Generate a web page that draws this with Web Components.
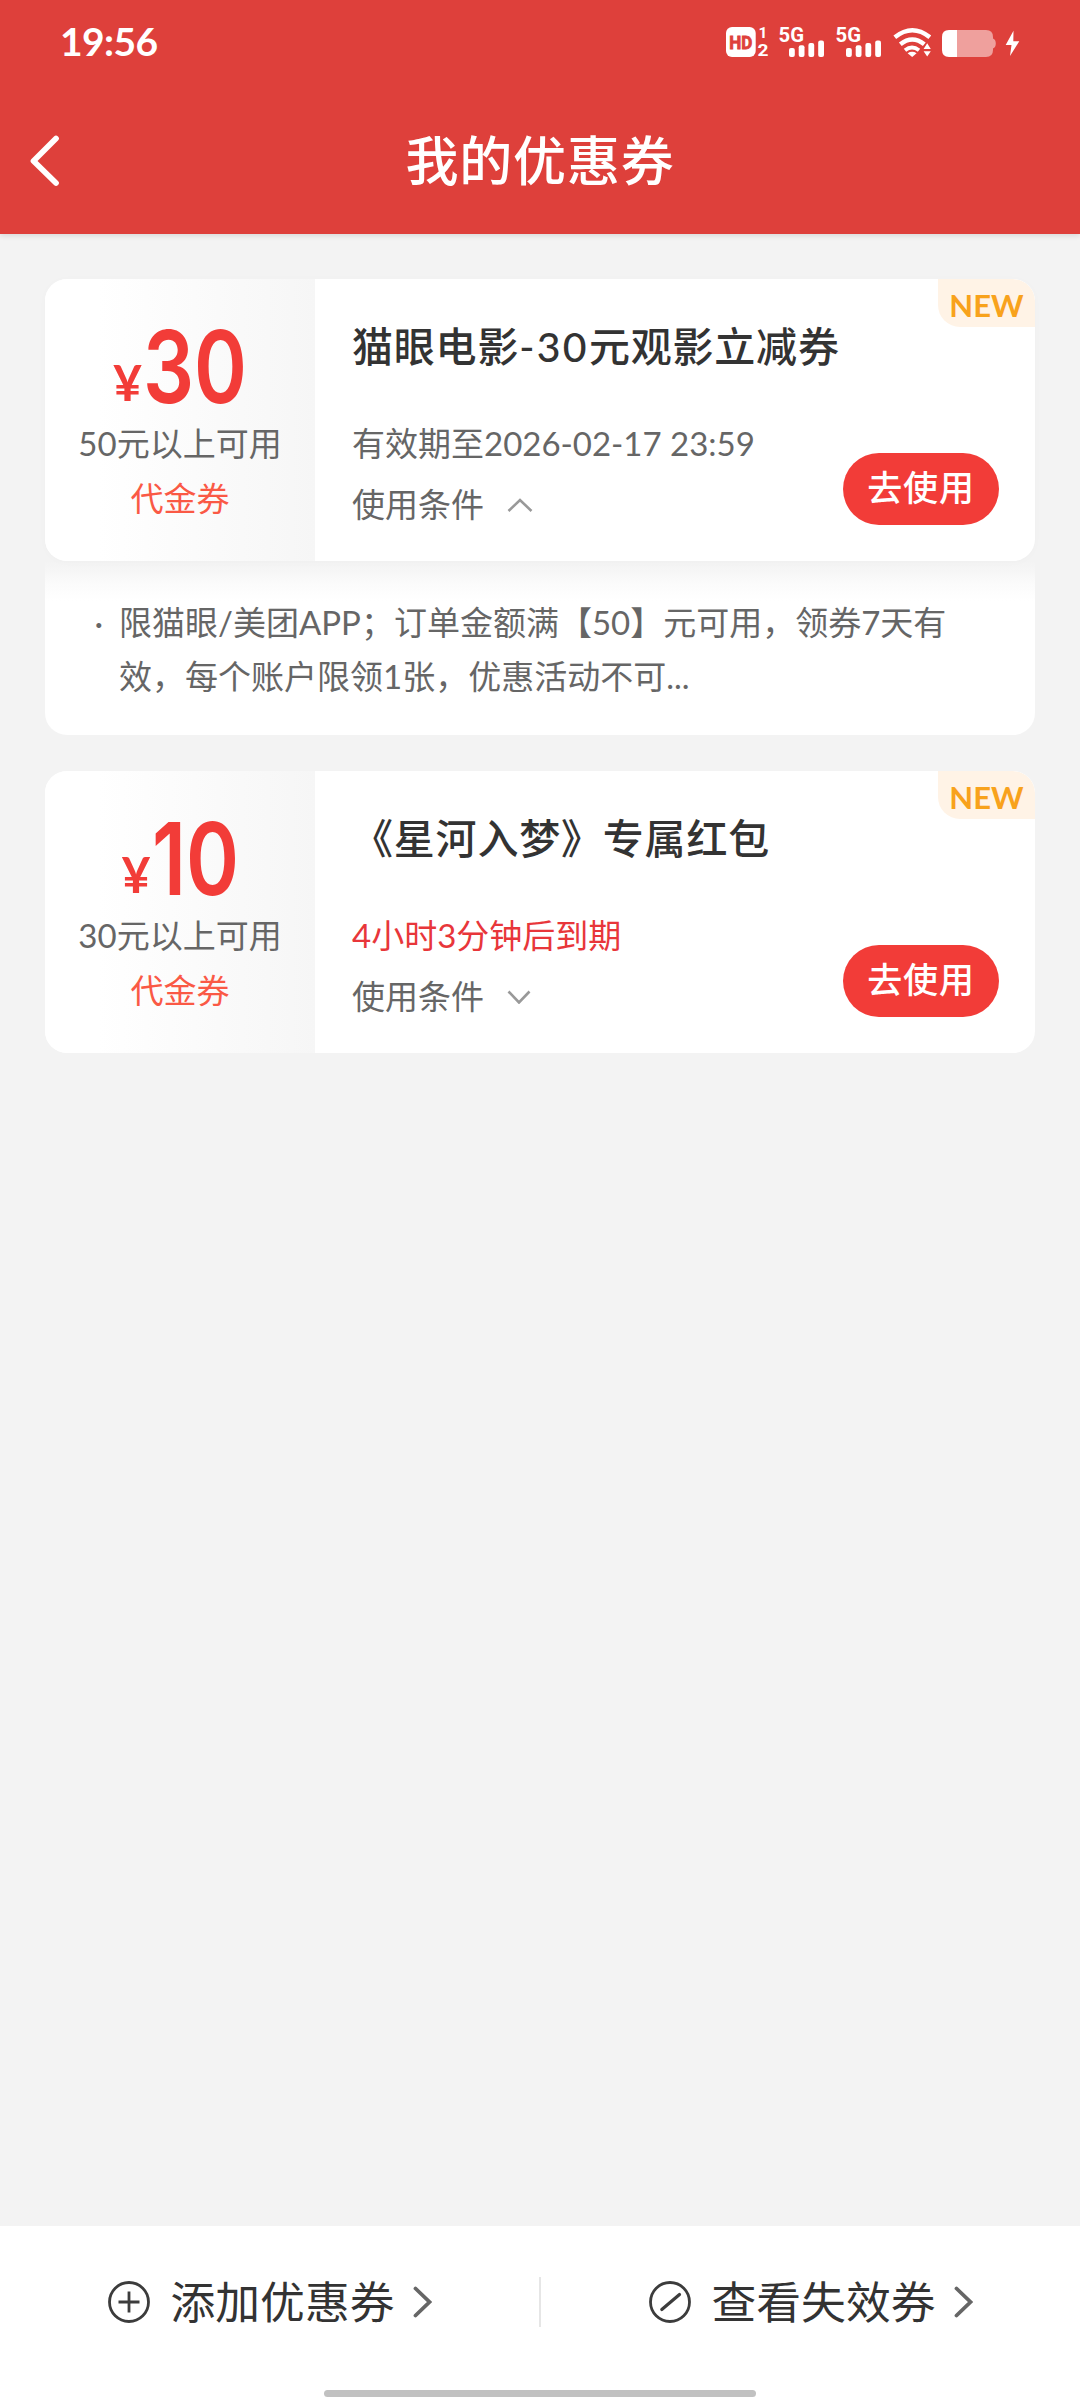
<!DOCTYPE html>
<html lang="zh-CN">
<head>
<meta charset="utf-8">
<title>我的优惠券</title>
<style>
  html, body { margin: 0; padding: 0; }
  body { font-family: Lato, "Noto Sans CJK SC", sans-serif; background: #f3f3f3; }
</style>
</head>
<body>
<coupon-app></coupon-app>
<script>
const define = (name, html, setup) => {
  const tpl = document.createElement('template');
  tpl.innerHTML = html;
  customElements.define(name, class extends HTMLElement {
    constructor() {
      super();
      this.attachShadow({ mode: 'open' }).appendChild(tpl.content.cloneNode(true));
    }
    connectedCallback() { if (setup) setup(this, this.shadowRoot); }
  });
};

define('signal-icon', `
<style>:host{display:block;width:46px;height:40px}svg{display:block}</style>
<svg width="46" height="40" viewBox="778 20 46 40" fill="#fff">
  <text x="778.6" y="41.6" font-family="Roboto" font-weight="700" font-size="20.5" textLength="25.5" lengthAdjust="spacingAndGlyphs">5G</text>
  <rect x="789" y="48" width="5.8" height="9" rx="2"/>
  <rect x="798.7" y="45.3" width="5.8" height="11.7" rx="2"/>
  <rect x="808.4" y="43" width="5.8" height="14" rx="2"/>
  <rect x="818.2" y="40.5" width="5.8" height="16.5" rx="2"/>
</svg>`);

define('status-bar', `
<style>
  :host{display:flex;height:84px;box-sizing:border-box;padding:0 60px 0 60px;justify-content:space-between;color:#fff}
  .time{font-size:39px;line-height:83px;font-weight:700;letter-spacing:-.6px}
  .icons{display:flex;padding-top:20px;height:40px}
  svg{display:block}
</style>
<span class="time">19:56</span>
<div class="icons">
  <svg width="52" height="40" viewBox="726 20 52 40" fill="#fff">
    <rect x="726" y="27" width="29.7" height="30" rx="6"/>
    <text x="729.3" y="49" fill="#de403b" stroke="#de403b" stroke-width=".9" font-family="Roboto" font-weight="700" font-size="19" textLength="23" lengthAdjust="spacingAndGlyphs">HD</text>
    <text x="758.4" y="37.8" font-family="Roboto" font-weight="700" font-size="15.500">1</text>
    <text x="757.6" y="56.3" font-family="Roboto" font-weight="700" font-size="17" textLength="11" lengthAdjust="spacingAndGlyphs">2</text>
  </svg>
  <signal-icon></signal-icon>
  <signal-icon style="margin-left:11px"></signal-icon>
  <svg width="50" height="40" viewBox="881 20 50 40" fill="none" stroke="#fff" stroke-width="4.4">
    <path d="M894.8 37.2Q912.3 23.2 929.8 37.2"/>
    <path d="M900.3 44.3Q912.3 34.5 924.3 44.3"/>
    <path d="M905 50.3Q912 44.6 919 50.3" stroke-width="3.8"/>
    <path d="M907.6 53.2Q912.2 50.4 916.6 53.2L912.2 57Z" fill="#fff" stroke="none"/>
    <path d="M923.6 49L927.2 43.2L930.8 49ZM923.6 51.2H930.8L927.2 56.6Z" fill="#fff" stroke="none"/>
  </svg>
  <svg width="89" height="40" viewBox="931 20 89 40" fill="#fff">
    <path opacity=".5" d="M957 30H986Q993 30 993 37V38.5Q995.8 39.5 995.8 43.5T993 48.500V50Q993 57 986 57H957Z"/>
    <path d="M957 30V57H949Q942 57 942 50V37Q942 30 949 30Z"/>
    <path d="M1013.500 30.700L1005.700 45H1011.500L1010 56L1019.300 41.200H1013.300Z"/>
  </svg>
</div>`);

define('app-header', `
<style>
  :host{display:block;height:234px;background:#de403b;color:#fff;box-shadow:0 2px 5px rgba(0,0,0,.1);position:relative}
  nav{display:grid;grid-template-columns:90px 1fr 90px;height:150px;align-items:center}
  svg{display:block}
  h1{margin:0;font-size:53px;font-weight:500;line-height:153px;text-align:center;letter-spacing:.8px}
</style>
<status-bar></status-bar>
<nav>
  <svg width="90" height="150" viewBox="0 84 90 150" fill="none" stroke="#fff" stroke-width="5.700" stroke-linecap="round" stroke-linejoin="round"><path d="M56 136.500L33.500 159L56 181"/></svg>
  <h1><slot></slot></h1>
</nav>`);

define('price-tag', `
<style>
  :host{display:flex;height:90px;justify-content:center;color:#f23c38}
  .y{font-size:50px;font-weight:700;line-height:60px;padding-top:31px;width:29px;margin-right:1px}
  svg{display:block;overflow:visible}
  text{font-family:Inter;font-weight:600;font-size:100px;fill:#f23c38}
</style>
<span class="y">¥</span><svg height="90"><text y="82" x="0" lengthAdjust="spacingAndGlyphs"></text></svg>`,
(el, root) => {
  const w = el.getAttribute('width');
  root.querySelector('svg').setAttribute('width', w);
  const t = root.querySelector('text');
  t.setAttribute('textLength', w);
  t.textContent = el.getAttribute('value');
});

define('use-button', `
<style>
  :host{display:block;width:156px;height:72px;border-radius:36px;background:#f23c38;color:#fff;
    font-size:35px;font-weight:500;line-height:69px;text-align:center;letter-spacing:.8px}
</style><slot></slot>`);

define('new-badge', `
<style>
  :host{display:block;width:97px;height:48px;border-radius:0 22px 0 22px;background:#fff3e6;color:#f8a21c;
    font-size:31px;font-weight:700;line-height:52px;text-align:center}
</style>NEW`);

define('coupon-card', `
<style>
  :host{display:block}
  .card{position:relative;display:flex;height:282px;border-radius:22px;background:#fff;overflow:hidden}
  :host([open]) .card{box-shadow:0 1px 8px rgba(0,0,0,.02)}
  .left{flex:none;width:270px;box-sizing:border-box;padding-top:42px;background:linear-gradient(90deg,#fff 20%,#f6f6f6);text-align:center}
  .sub,.kind,.date,.cond{font-size:33px;line-height:54px;color:#666}
  .sub{margin-top:5px}
  .kind{color:#fa5945;margin-top:1px}
  .right{flex:1;display:flex;justify-content:space-between;padding:37px 36px 0 37px}
  .title{font-size:41px;font-weight:500;line-height:61px;color:#333;white-space:nowrap;letter-spacing:.8px}
  .date{margin-top:39px;white-space:nowrap}
  .info{width:490px}
  :host([urgent]) .date{color:#e8363a}
  .cond{display:flex;margin-top:7px;align-items:center}
  .cond svg{margin:2px 0 0 23px}
  .down{display:none}
  :host(:not([open])) .down{display:block}
  :host(:not([open])) .up{display:none}
  use-button{margin-top:137px;flex:none}
  new-badge{position:absolute;right:0;top:0}
  .terms{display:none}
  :host([open]) .terms{display:flex;height:174px;margin-top:-24px;padding-top:24px;border-radius:0 0 22px 22px;
    background:linear-gradient(#f3f3f3 24px,#f6f6f6 34px,#fbfbfb 46px,#fff 64px)}
  .dot{width:74px;padding:34px 0 0 0;line-height:54px;font-size:33px;color:#666;box-sizing:border-box;text-align:right;padding-right:16px}
  .body{padding-top:34px;line-height:54px;font-size:33px;color:#666}
</style>
<div class="card">
  <div class="left">
    <price-tag></price-tag>
    <div class="sub"><slot name="sub"></slot></div>
    <div class="kind">代金券</div>
  </div>
  <div class="right">
    <div class="info">
      <div class="title"><slot name="title"></slot></div>
      <div class="date"><slot name="date"></slot></div>
      <div class="cond">使用条件
        <svg class="up" width="26" height="14" viewBox="0 0 26 14" fill="none" stroke="#999" stroke-width="2.600"><path d="M1.500 13L13 2L24.500 13"/></svg>
        <svg class="down" width="26" height="14" viewBox="0 0 26 14" fill="none" stroke="#999" stroke-width="2.600"><path d="M1.500 1.500L12 12.500L22.500 1.500"/></svg>
      </div>
    </div>
    <use-button>去使用</use-button>
  </div>
  <new-badge></new-badge>
</div>
<div class="terms"><span class="dot">·</span><div class="body"><slot name="terms"></slot></div></div>`,
(el, root) => {
  const p = root.querySelector('price-tag');
  p.setAttribute('value', el.getAttribute('value'));
  p.setAttribute('width', el.getAttribute('value-width'));
  p.replaceWith(p.cloneNode());
});

define('bottom-link', `
<style>
  :host{display:flex;align-items:center;justify-content:center;font-size:44.8px;color:#333;line-height:60px}
  .t{margin:0 18px 0 21px;white-space:nowrap}
  svg{display:block}
  .plus,.slash{display:none}
  :host([icon=plus]) .plus,:host([icon=slash]) .slash{display:block}
</style>
<svg width="42" height="42" viewBox="0 0 42 42" fill="none" stroke="#3c3c3c" stroke-width="2.800">
  <circle cx="21" cy="21" r="19.500"/>
  <path class="plus" d="M10.500 21H31.500M21 10.500V31.500"/>
  <path class="slash" stroke-width="3.200" stroke-linecap="round" d="M12.800 28.500L30.500 13.500"/>
</svg>
<span class="t"><slot></slot></span>
<svg width="19" height="32" viewBox="0 0 19 32" fill="none" stroke="#666" stroke-width="3.800" stroke-linecap="round"><path d="M2.500 2.500L16.500 16L2.500 29.500"/></svg>`);

define('bottom-bar', `
<style>
  :host{display:flex;flex-direction:column;align-items:center;height:174px;background:#fff}
  .row{display:grid;grid-template-columns:539px 2px 539px;height:151px;align-items:center}
  i{height:50px;background:#e6e6e6}
  .home{width:432px;height:7px;border-radius:4px;background:#c1c1c1;margin-top:13px}
</style>
<div class="row">
  <bottom-link icon="plus">添加优惠券</bottom-link><i></i><bottom-link icon="slash">查看失效券</bottom-link>
</div>
<div class="home"></div>`);

define('coupon-app', `
<style>
  :host{display:flex;flex-direction:column;width:1080px;height:2400px;background:#f3f3f3;overflow:hidden}
  main{flex:1;display:flex;flex-direction:column;gap:36px;padding:45px 45px 0}
  .num{letter-spacing:2.300px}
</style>
<app-header>我的优惠券</app-header>
<main>
  <coupon-card open value="30" value-width="104">
    <span slot="sub">50元以上可用</span>
    <span slot="title">猫眼电影<span class="num">-30</span>元观影立减券</span>
    <span slot="date">有效期至2026-02-17 23:59</span>
    <span slot="terms">限猫眼/美团APP；订单金额满【50】元可用，领券7天有<br>效，每个账户限领1张，优惠活动不可...</span>
  </coupon-card>
  <coupon-card urgent value="10" value-width="87">
    <span slot="sub">30元以上可用</span>
    <span slot="title">《星河入梦》专属红包</span>
    <span slot="date">4小时3分钟后到期</span>
  </coupon-card>
</main>
<bottom-bar></bottom-bar>`);
</script>
</body>
</html>
